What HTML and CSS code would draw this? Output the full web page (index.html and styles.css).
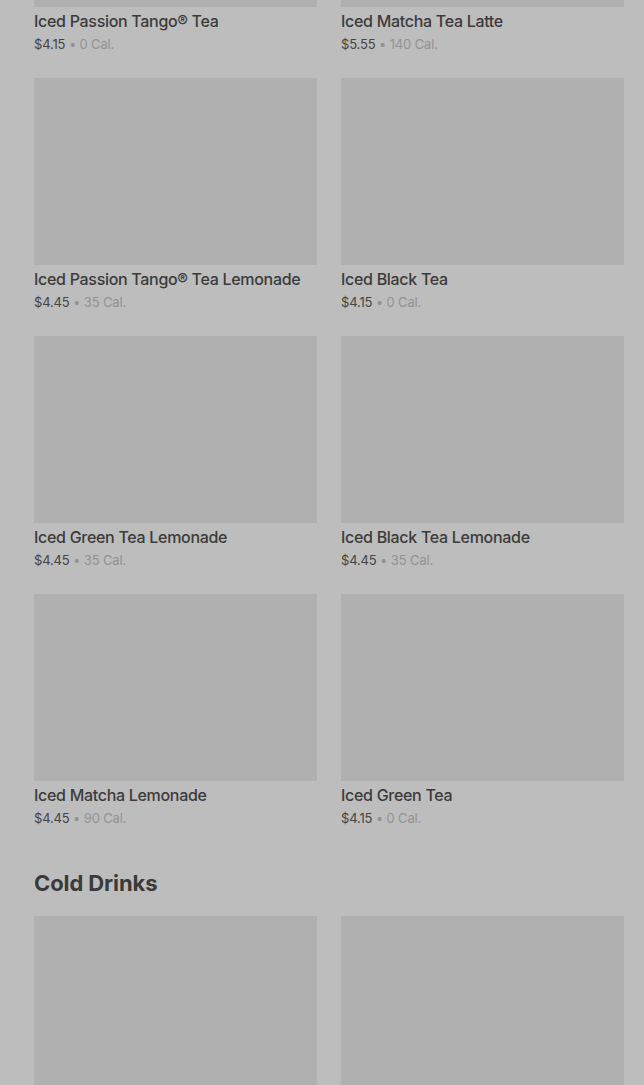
FILE: index.html
```html
<!DOCTYPE html>
<html lang="en">
<head>
    <meta charset="UTF-8">
    <meta name="viewport" content="width=device-width, initial-scale=1.0">
    <title>Menu</title>
    <link rel="stylesheet" href="styles.css">
</head>
<body>
    <div class="page">
        <div class="grid first">
            <div class="item">
                <div class="photo"></div>
                <div class="name">Iced Passion Tango® Tea</div>
                <div class="meta"><span class="price">$4.15</span> • 0 Cal.</div>
            </div>
            <div class="item">
                <div class="photo"></div>
                <div class="name">Iced Matcha Tea Latte</div>
                <div class="meta"><span class="price">$5.55</span> • 140 Cal.</div>
            </div>
            <div class="item">
                <div class="photo"></div>
                <div class="name">Iced Passion Tango® Tea Lemonade</div>
                <div class="meta"><span class="price">$4.45</span> • 35 Cal.</div>
            </div>
            <div class="item">
                <div class="photo"></div>
                <div class="name">Iced Black Tea</div>
                <div class="meta"><span class="price">$4.15</span> • 0 Cal.</div>
            </div>
            <div class="item">
                <div class="photo"></div>
                <div class="name">Iced Green Tea Lemonade</div>
                <div class="meta"><span class="price">$4.45</span> • 35 Cal.</div>
            </div>
            <div class="item">
                <div class="photo"></div>
                <div class="name">Iced Black Tea Lemonade</div>
                <div class="meta"><span class="price">$4.45</span> • 35 Cal.</div>
            </div>
            <div class="item">
                <div class="photo"></div>
                <div class="name">Iced Matcha Lemonade</div>
                <div class="meta"><span class="price">$4.45</span> • 90 Cal.</div>
            </div>
            <div class="item">
                <div class="photo"></div>
                <div class="name">Iced Green Tea</div>
                <div class="meta"><span class="price">$4.15</span> • 0 Cal.</div>
            </div>
        </div>

        <h2 class="section-title">Cold Drinks</h2>

        <div class="grid">
            <div class="item">
                <div class="photo"></div>
            </div>
            <div class="item">
                <div class="photo"></div>
            </div>
        </div>
    </div>
</body>
</html>
```

FILE: styles.css
```css
body, html {
    margin: 0;
    padding: 0;
    font-family: Inter, "Open Sans", sans-serif;
    background-color: #bdbdbd;
    overflow: hidden;
}

.page {
    padding: 0 20px 0 34px;
}

.grid {
    display: grid;
    grid-template-columns: 1fr 1fr;
    column-gap: 24px;
    row-gap: 25px;
}

.grid.first {
    margin-top: -180px;
}

.photo {
    height: 187px;
    background-color: #b0b0b0;
}

.name {
    margin-top: 4px;
    font-size: 16px;
    line-height: 20px;
    font-weight: 500;
    letter-spacing: -0.3px;
    color: #3b3b3b;
    white-space: nowrap;
}

.meta {
    margin-top: 4px;
    font-size: 13px;
    line-height: 18px;
    letter-spacing: -0.15px;
    color: #929292;
}

.price {
    color: #444444;
}

.section-title {
    margin: 42px 0 19px;
    font-size: 22px;
    line-height: 28px;
    font-weight: 700;
    letter-spacing: -0.1px;
    color: #3a3a3a;
}
```
